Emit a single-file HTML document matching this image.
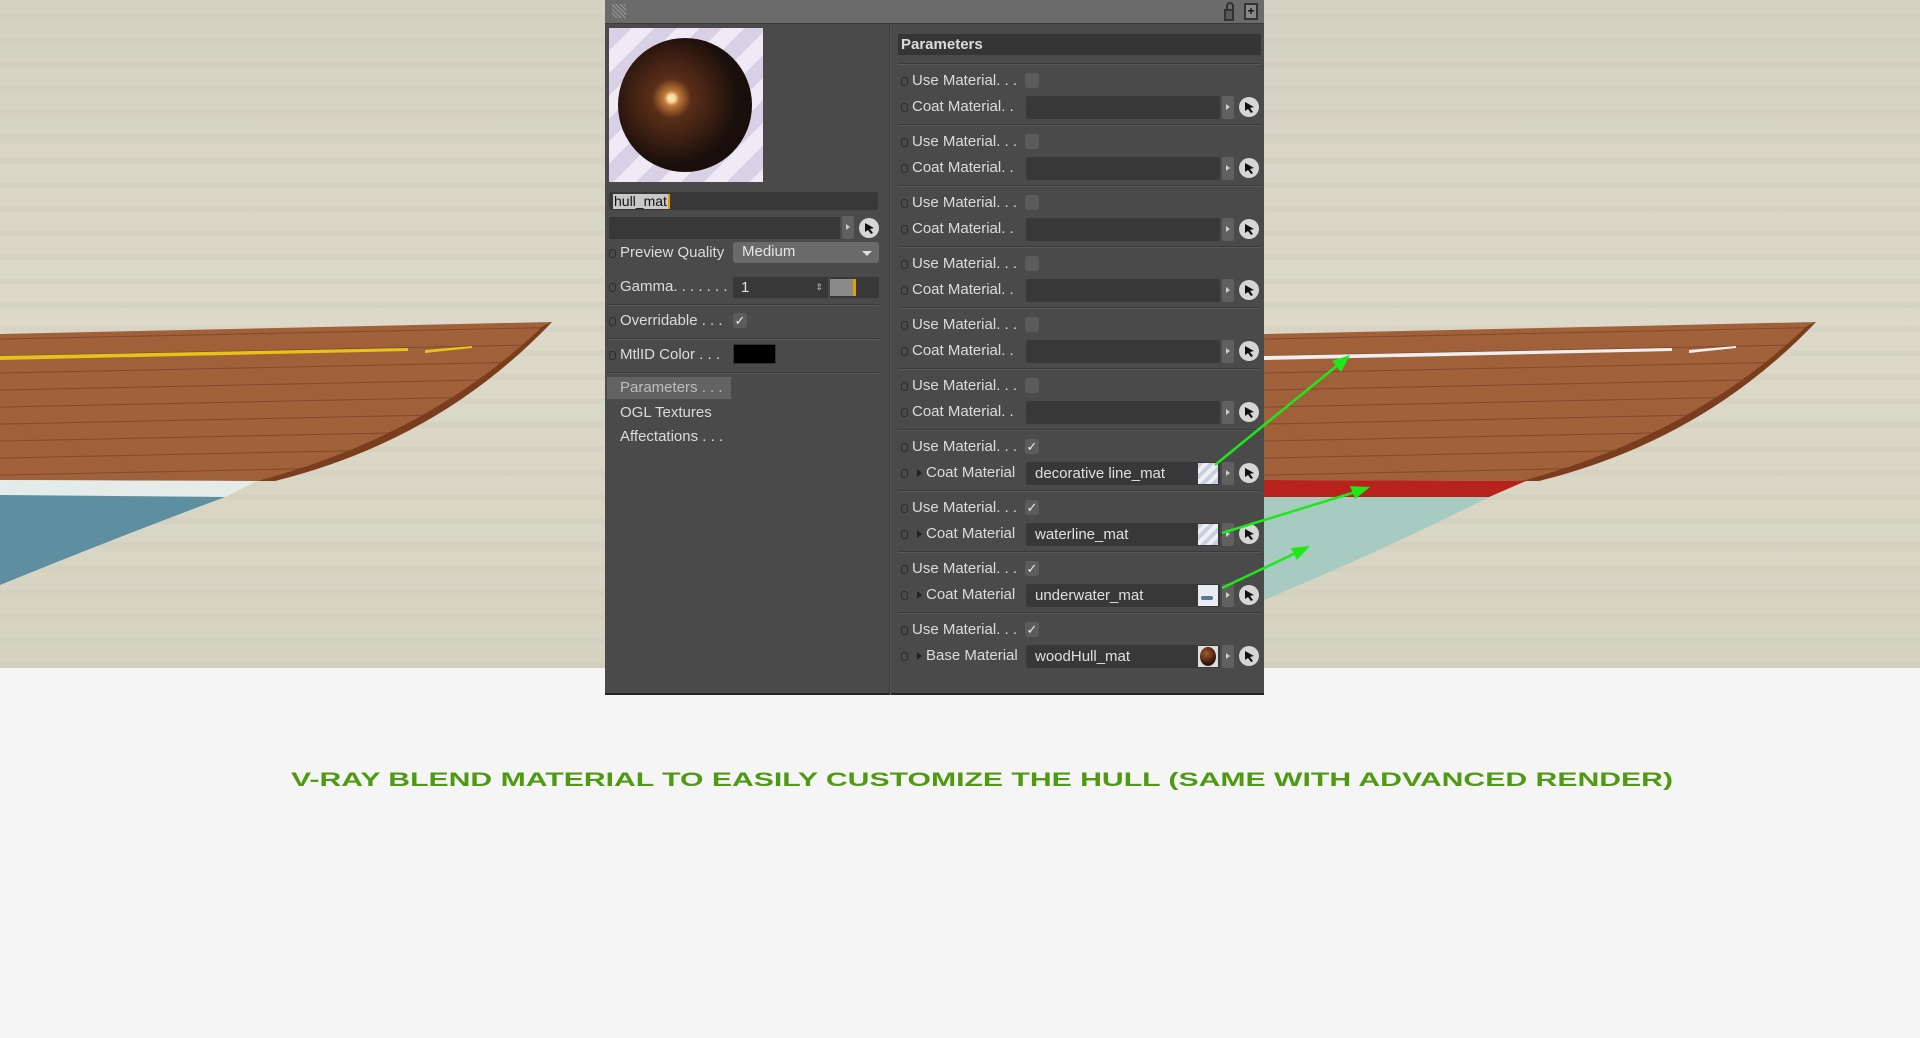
<!DOCTYPE html>
<html><head><meta charset="utf-8">
<style>
*{margin:0;padding:0;box-sizing:border-box}
body{width:1920px;height:1038px;background:#f5f5f5;position:relative;overflow:hidden;font-family:"Liberation Sans",sans-serif}
.a{position:absolute}
.t{position:absolute;color:#dcdcdc;font-size:15px;line-height:18px;white-space:nowrap}
.dot{position:absolute;width:7px;height:9px;border:1.5px solid #2c2c2c;border-radius:3px}
.sep{position:absolute;left:898px;width:363px;height:2px;border-top:1px solid #3a3a3a;border-bottom:1px solid #585858}
.cb{position:absolute;left:1025px;width:14px;height:15px;background:#5c5c5c;border-radius:3px;color:#eee;font-size:13px;line-height:15px;text-align:center}
.fld{position:absolute;left:1026px;width:194px;height:23px;background:#383838;border-radius:2px;color:#e0e0e0;font-size:15px;line-height:23px;padding-left:9px}
.ab{position:absolute;left:1222px;width:12px;height:23px;background:#606060;border-radius:2px}
.ab:after{content:"";position:absolute;left:4px;top:8px;border-left:4px solid #ccc;border-top:3px solid transparent;border-bottom:3px solid transparent}
.ci{position:absolute;left:1239px;width:20px;height:20px;border-radius:50%;background:#d6d6d6}
.tri{position:absolute;border-left:5px solid #222;border-top:4px solid transparent;border-bottom:4px solid transparent}
.sw{position:absolute;left:1198px;width:20px;height:21px;background:repeating-linear-gradient(135deg,#c8d0e0 0 4px,#eef0f5 4px 8px)}
</style></head><body>
<svg class="a" style="left:0;top:0" width="1920" height="668" viewBox="0 0 1920 668">
<defs>
<linearGradient id="bg" x1="0" y1="0" x2="0" y2="1"><stop offset="0" stop-color="#d4d2c3"/><stop offset=".5" stop-color="#dcd9c8"/><stop offset="1" stop-color="#d6d3c1"/></linearGradient>
<pattern id="grain" width="40" height="24" patternUnits="userSpaceOnUse"><rect y="14" width="40" height="6" fill="#c9c5b2" opacity=".25"/></pattern>
<pattern id="plank" width="100" height="17" patternUnits="userSpaceOnUse" patternTransform="rotate(-1.2)"><rect width="100" height="17" fill="#a0603a"/><rect y="15.5" width="100" height="1" fill="#6a3a20" opacity=".6"/></pattern>
</defs>
<rect width="1920" height="668" fill="url(#bg)"/>
<rect width="1920" height="668" fill="url(#grain)"/>
<path d="M0,334 L552,322 Q436,438 257,481 L0,480 Z" fill="url(#plank)"/>
<path d="M552,322 L543,326 Q428,436 257,481 L275,481 Q440,440 552,322Z" fill="#7a3e1f"/>
<path d="M0,356 L408,348 L408,351 L0,360Z" fill="#e6c21a"/>
<path d="M425,350 L472,346 L472,348 L425,353Z" fill="#e6c21a"/>
<path d="M0,480 L257,481 L225,497 L0,495Z" fill="#e4ebe8"/>
<path d="M0,495 L225,497 Q110,540 0,585Z" fill="#5d8fa0"/>
<g transform="translate(1264,0)">
<path d="M0,334 L552,322 Q436,438 257,481 L0,480 Z" fill="url(#plank)"/>
<path d="M552,322 L543,326 Q428,436 257,481 L275,481 Q440,440 552,322Z" fill="#7a3e1f"/>
<path d="M0,356 L408,348 L408,351 L0,360Z" fill="#eeeeee"/>
<path d="M425,350 L472,346 L472,348 L425,353Z" fill="#eeeeee"/>
<path d="M0,480 L262,481 L225,497 L0,497Z" fill="#b8221c"/>
<path d="M0,497 L225,497 Q120,550 0,600Z" fill="#a7cbc0"/>
</g>
</svg>
<!-- panel -->
<div class="a" style="left:605px;top:0;width:659px;height:695px;background:#4a4a4a;border-bottom:2px solid #222"></div>
<div class="a" style="left:605px;top:0;width:659px;height:24px;background:#6b6b6b;border-bottom:1px solid #3a3a3a"></div>
<div class="a" style="left:612px;top:4px;width:14px;height:14px;background:repeating-linear-gradient(45deg,#999 0 1px,transparent 1px 3px)"></div>
<div class="a" style="left:1224px;top:9px;width:10px;height:12px;border:2px solid #333;background:#5a5a5a"></div>
<div class="a" style="left:1226px;top:2px;width:8px;height:8px;border:2px solid #333;border-bottom:none;border-radius:4px 4px 0 0"></div>
<div class="a" style="left:1244px;top:3px;width:14px;height:17px;border:2px solid #333;background:#888;font-size:12px;line-height:13px;text-align:center;color:#111;font-weight:bold">+</div>
<div class="a" style="left:889px;top:25px;width:2px;height:670px;background:#3c3c3c;border-right:1px solid #555"></div>
<!-- preview -->
<div class="a" style="left:609px;top:28px;width:154px;height:154px;background:repeating-linear-gradient(135deg,#d8d0e4 0 16px,#efeaf5 16px 32px)"></div>
<div class="a" style="left:618px;top:38px;width:134px;height:134px;border-radius:50%;background:radial-gradient(circle at 40% 45%,#fbe0a8 0 3%,#c07838 7%,#5a2e18 18%,#3a1e12 40%,#1b0f0b 60%,#120a08 100%)"></div>
<div class="a" style="left:609px;top:192px;width:269px;height:18px;background:#383838;border-radius:2px"></div>
<div class="a" style="left:613px;top:194px;height:15px;background:#c8c8c8;color:#111;font-size:14px;line-height:15px;padding:0 1px;border-right:2px solid #e8a000">hull_mat</div>
<div class="a" style="left:609px;top:217px;width:231px;height:22px;background:#383838;border-radius:2px"></div>
<div class="ab" style="left:842px;top:216px"></div>
<div class="ci" style="left:859px;top:218px"><svg width="20" height="20"><path d="M6,5 L15,10 L11,11 L14,15 L12,16 L9,12 L6,14Z" fill="#111"/></svg></div>
<div class="dot" style="left:609px;top:249px"></div><div class="t" style="left:620px;top:244px">Preview Quality</div>
<div class="a" style="left:733px;top:242px;width:146px;height:21px;background:#6a6a6a;border-radius:3px;color:#e6e6e6;font-size:15px;line-height:20px;padding-left:9px">Medium<span style="position:absolute;right:7px;top:9px;border-top:5px solid #ddd;border-left:5px solid transparent;border-right:5px solid transparent"></span></div>
<div class="dot" style="left:609px;top:283px"></div><div class="t" style="left:620px;top:278px">Gamma. . . . . . .</div>
<div class="a" style="left:733px;top:277px;width:95px;height:21px;background:#383838;color:#e0e0e0;font-size:15px;line-height:21px;padding-left:8px">1<span style="position:absolute;right:5px;top:0;font-size:9px;color:#bbb">&#8661;</span></div>
<div class="a" style="left:830px;top:277px;width:49px;height:21px;background:#383838"></div>
<div class="a" style="left:830px;top:279px;width:23px;height:17px;background:#8a8a8a"></div>
<div class="a" style="left:853px;top:279px;width:3px;height:17px;background:#e8a000"></div>
<div class="a" style="left:607px;top:304px;width:272px;height:2px;border-top:1px solid #3a3a3a;border-bottom:1px solid #585858"></div>
<div class="dot" style="left:609px;top:317px"></div><div class="t" style="left:620px;top:312px">Overridable . . .</div>
<div class="cb" style="left:733px;top:313px">&#10003;</div>
<div class="a" style="left:607px;top:338px;width:272px;height:2px;border-top:1px solid #3a3a3a;border-bottom:1px solid #585858"></div>
<div class="dot" style="left:609px;top:351px"></div><div class="t" style="left:620px;top:346px">MtlID Color . . .</div>
<div class="a" style="left:733px;top:344px;width:43px;height:20px;background:#000;border:1px solid #333"></div>
<div class="a" style="left:607px;top:372px;width:272px;height:2px;border-top:1px solid #3a3a3a;border-bottom:1px solid #585858"></div>
<div class="a" style="left:607px;top:377px;width:124px;height:22px;background:#636363"></div>
<div class="t" style="left:620px;top:379px;color:#bdbdbd">Parameters . . .</div>
<div class="t" style="left:620px;top:404px">OGL Textures</div>
<div class="t" style="left:620px;top:428px">Affectations . . .</div>
<!-- right -->
<div class="a" style="left:898px;top:34px;width:363px;height:21px;background:#353535"></div>
<div class="t" style="left:901px;top:36px;font-weight:bold;font-size:15px">Parameters</div>

<div class="sep" style="top:63px"></div>
<div class="dot" style="left:901px;top:77px"></div><div class="t" style="left:912px;top:72px">Use Material. . .</div><div class="cb" style="left:1025px;top:73px"></div>
<div class="dot" style="left:901px;top:103px"></div><div class="t" style="left:912px;top:98px">Coat Material. .</div><div class="fld" style="top:96px"></div><div class="ab" style="top:96px"></div><div class="ci" style="top:97px"><svg width="20" height="20"><path d="M6,5 L15,10 L11,11 L14,15 L12,16 L9,12 L6,14Z" fill="#111"/></svg></div>

<div class="sep" style="top:124px"></div>
<div class="dot" style="left:901px;top:138px"></div><div class="t" style="left:912px;top:133px">Use Material. . .</div><div class="cb" style="left:1025px;top:134px"></div>
<div class="dot" style="left:901px;top:164px"></div><div class="t" style="left:912px;top:159px">Coat Material. .</div><div class="fld" style="top:157px"></div><div class="ab" style="top:157px"></div><div class="ci" style="top:158px"><svg width="20" height="20"><path d="M6,5 L15,10 L11,11 L14,15 L12,16 L9,12 L6,14Z" fill="#111"/></svg></div>

<div class="sep" style="top:185px"></div>
<div class="dot" style="left:901px;top:199px"></div><div class="t" style="left:912px;top:194px">Use Material. . .</div><div class="cb" style="left:1025px;top:195px"></div>
<div class="dot" style="left:901px;top:225px"></div><div class="t" style="left:912px;top:220px">Coat Material. .</div><div class="fld" style="top:218px"></div><div class="ab" style="top:218px"></div><div class="ci" style="top:219px"><svg width="20" height="20"><path d="M6,5 L15,10 L11,11 L14,15 L12,16 L9,12 L6,14Z" fill="#111"/></svg></div>

<div class="sep" style="top:246px"></div>
<div class="dot" style="left:901px;top:260px"></div><div class="t" style="left:912px;top:255px">Use Material. . .</div><div class="cb" style="left:1025px;top:256px"></div>
<div class="dot" style="left:901px;top:286px"></div><div class="t" style="left:912px;top:281px">Coat Material. .</div><div class="fld" style="top:279px"></div><div class="ab" style="top:279px"></div><div class="ci" style="top:280px"><svg width="20" height="20"><path d="M6,5 L15,10 L11,11 L14,15 L12,16 L9,12 L6,14Z" fill="#111"/></svg></div>

<div class="sep" style="top:307px"></div>
<div class="dot" style="left:901px;top:321px"></div><div class="t" style="left:912px;top:316px">Use Material. . .</div><div class="cb" style="left:1025px;top:317px"></div>
<div class="dot" style="left:901px;top:347px"></div><div class="t" style="left:912px;top:342px">Coat Material. .</div><div class="fld" style="top:340px"></div><div class="ab" style="top:340px"></div><div class="ci" style="top:341px"><svg width="20" height="20"><path d="M6,5 L15,10 L11,11 L14,15 L12,16 L9,12 L6,14Z" fill="#111"/></svg></div>

<div class="sep" style="top:368px"></div>
<div class="dot" style="left:901px;top:382px"></div><div class="t" style="left:912px;top:377px">Use Material. . .</div><div class="cb" style="left:1025px;top:378px"></div>
<div class="dot" style="left:901px;top:408px"></div><div class="t" style="left:912px;top:403px">Coat Material. .</div><div class="fld" style="top:401px"></div><div class="ab" style="top:401px"></div><div class="ci" style="top:402px"><svg width="20" height="20"><path d="M6,5 L15,10 L11,11 L14,15 L12,16 L9,12 L6,14Z" fill="#111"/></svg></div>

<div class="sep" style="top:429px"></div>
<div class="dot" style="left:901px;top:443px"></div><div class="t" style="left:912px;top:438px">Use Material. . .</div><div class="cb" style="left:1025px;top:439px">&#10003;</div>
<div class="dot" style="left:901px;top:469px"></div><div class="tri" style="left:917px;top:469px"></div><div class="t" style="left:926px;top:464px">Coat Material</div><div class="fld" style="top:462px">decorative line_mat</div><div class="sw" style="top:463px"></div><div class="ab" style="top:462px"></div><div class="ci" style="top:463px"><svg width="20" height="20"><path d="M6,5 L15,10 L11,11 L14,15 L12,16 L9,12 L6,14Z" fill="#111"/></svg></div>

<div class="sep" style="top:490px"></div>
<div class="dot" style="left:901px;top:504px"></div><div class="t" style="left:912px;top:499px">Use Material. . .</div><div class="cb" style="left:1025px;top:500px">&#10003;</div>
<div class="dot" style="left:901px;top:530px"></div><div class="tri" style="left:917px;top:530px"></div><div class="t" style="left:926px;top:525px">Coat Material</div><div class="fld" style="top:523px">waterline_mat</div><div class="sw" style="top:524px"></div><div class="ab" style="top:523px"></div><div class="ci" style="top:524px"><svg width="20" height="20"><path d="M6,5 L15,10 L11,11 L14,15 L12,16 L9,12 L6,14Z" fill="#111"/></svg></div>

<div class="sep" style="top:551px"></div>
<div class="dot" style="left:901px;top:565px"></div><div class="t" style="left:912px;top:560px">Use Material. . .</div><div class="cb" style="left:1025px;top:561px">&#10003;</div>
<div class="dot" style="left:901px;top:591px"></div><div class="tri" style="left:917px;top:591px"></div><div class="t" style="left:926px;top:586px">Coat Material</div><div class="fld" style="top:584px">underwater_mat</div><div class="sw" style="top:585px;background:#e8ecf2"></div><div class="a" style="left:1201px;top:596px;width:12px;height:4px;background:#557a90;border-radius:2px"></div><div class="ab" style="top:584px"></div><div class="ci" style="top:585px"><svg width="20" height="20"><path d="M6,5 L15,10 L11,11 L14,15 L12,16 L9,12 L6,14Z" fill="#111"/></svg></div>

<div class="sep" style="top:612px"></div>
<div class="dot" style="left:901px;top:626px"></div><div class="t" style="left:912px;top:621px">Use Material. . .</div><div class="cb" style="left:1025px;top:622px">&#10003;</div>
<div class="dot" style="left:901px;top:652px"></div><div class="tri" style="left:917px;top:652px"></div><div class="t" style="left:926px;top:647px">Base Material</div><div class="fld" style="top:645px">woodHull_mat</div><div class="a" style="left:1198px;top:646px;width:20px;height:21px;background:#ddd"></div><div class="a" style="left:1200px;top:647px;width:16px;height:19px;border-radius:50%;background:radial-gradient(circle at 40% 35%,#a65a2a,#2a1008 70%)"></div><div class="ab" style="top:645px"></div><div class="ci" style="top:646px"><svg width="20" height="20"><path d="M6,5 L15,10 L11,11 L14,15 L12,16 L9,12 L6,14Z" fill="#111"/></svg></div>

<!-- arrows -->
<svg class="a" style="left:0;top:0" width="1920" height="700">
<g stroke="#1ee81a" stroke-width="2.5">
<line x1="1215" y1="465" x2="1344" y2="360"/>
<line x1="1222" y1="533" x2="1362" y2="490"/>
<line x1="1222" y1="588" x2="1302" y2="550"/>
</g>
<g fill="#1ee81a">
<path d="M1350,355 L1332,361 L1341,372Z"/>
<path d="M1370,487 L1350,486 L1355,499Z"/>
<path d="M1310,546 L1291,548 L1297,560Z"/>
</g>
</svg>
<svg class="a" style="left:0;top:760px" width="1920" height="40">
<text x="291" y="26" textLength="1382" lengthAdjust="spacingAndGlyphs" font-family="Liberation Sans" font-weight="bold" font-size="19" fill="#4f9a12">V-RAY BLEND MATERIAL TO EASILY CUSTOMIZE THE HULL (SAME WITH ADVANCED RENDER)</text>
</svg>
</body></html>
